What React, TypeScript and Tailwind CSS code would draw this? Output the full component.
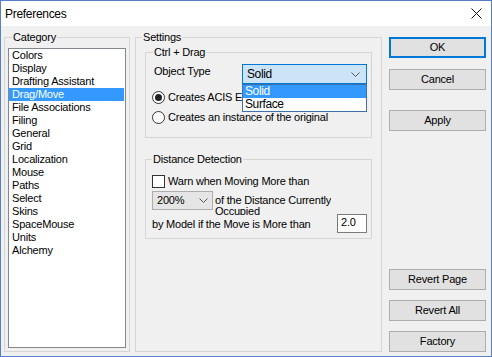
import React from "react";

const categories = [
  "Colors",
  "Display",
  "Drafting Assistant",
  "Drag/Move",
  "File Associations",
  "Filing",
  "General",
  "Grid",
  "Localization",
  "Mouse",
  "Paths",
  "Select",
  "Skins",
  "SpaceMouse",
  "Units",
  "Alchemy",
];

function Chevron() {
  return (
    <svg width="9" height="5" viewBox="0 0 9 5" className="shrink-0">
      <path d="M0.5 0.5 L4.5 4.5 L8.5 0.5" fill="none" stroke="#555" strokeWidth="1" />
    </svg>
  );
}

function Btn({ label, primary }: { label: string; primary?: boolean }) {
  return (
    <div
      className={
        "h-[21px] w-[97px] flex items-center justify-center bg-[#e1e1e1] text-black " +
        (primary ? "border-2 border-[#0078d7]" : "border border-[#adadad]")
      }
    >
      {label}
    </div>
  );
}

export default function App() {
  return (
    <div
      className="w-[492px] h-[357px] border border-[#5580c8] bg-[#f0f0f0] flex flex-col overflow-hidden text-[11px] tracking-[-0.2px] text-black"
      style={{ fontFamily: '"Liberation Sans", Arial, sans-serif' }}
    >
      {/* Title bar */}
      <div className="h-[25px] bg-white flex items-center justify-between pl-[4px] pr-[9px] shrink-0">
        <span className="text-[12px] tracking-[-0.3px]">Preferences</span>
        <svg width="11" height="11" viewBox="0 0 11 11">
          <path d="M0.5 0.5 L10.5 10.5 M10.5 0.5 L0.5 10.5" stroke="#111" strokeWidth="1" />
        </svg>
      </div>

      {/* Body */}
      <div className="flex-1 flex pt-[5px] pb-[4px] pl-[3px]">
        {/* Category */}
        <fieldset className="w-[126px] border border-[#d5d5d5] shrink-0 min-w-0">
          <legend className="ml-[7px] px-[1px] leading-[13px]">Category</legend>
          <div className="px-[3px] pt-[4px]">
            <div className="h-[300px] border border-[#828790] bg-white">
              {categories.map((c) => (
                <div
                  key={c}
                  className={
                    "h-[13px] leading-[13px] pl-[3px] whitespace-nowrap " +
                    (c === "Drag/Move" ? "bg-[#3399ff] text-white mr-[1px]" : "")
                  }
                >
                  {c}
                </div>
              ))}
            </div>
          </div>
        </fieldset>

        {/* Settings */}
        <fieldset className="ml-[5px] w-[247px] border border-[#d5d5d5] shrink-0 min-w-0">
          <legend className="ml-[6px] px-[1px] leading-[13px]">Settings</legend>
          <div className="pl-[9px] pr-[9px] pt-[2px]">
            {/* Ctrl + Drag */}
            <fieldset className="border border-[#d5d5d5] min-w-0">
              <legend className="ml-[7px] px-[1px] leading-[13px]">Ctrl + Drag</legend>
              <div className="pl-[6px] pr-[4px] pt-[5px] pb-[13px]">
                <div className="flex items-start h-[20px]">
                  <div className="w-[88px] ml-[2px] leading-[13px] pt-[1px] shrink-0">Object Type</div>
                  <div className="relative w-[125px] shrink-0">
                    <div className="h-[20px] border border-[#0078d7] bg-[#cce4f7] flex items-center justify-between pl-[4px] pr-[6px] text-[12px] tracking-[-0.4px]">
                      <span>Solid</span>
                      <Chevron />
                    </div>
                    <div className="absolute left-0 top-full w-full border border-[#3a6fb0] bg-white text-[12px] tracking-[-0.4px] z-10">
                      <div className="h-[13px] leading-[13px] pl-[2px] bg-[#3399ff] text-white">Solid</div>
                      <div className="h-[13px] leading-[13px] pl-[2px]">Surface</div>
                    </div>
                  </div>
                </div>
                <div className="flex items-center h-[14px] mt-[6px]">
                  <div className="w-[13px] h-[13px] rounded-full border border-[#333] bg-white flex items-center justify-center">
                    <div className="w-[7px] h-[7px] rounded-full bg-[#222]" />
                  </div>
                  <span className="ml-[3px] leading-[13px] whitespace-nowrap">Creates ACIS Entities</span>
                </div>
                <div className="flex items-center h-[14px] mt-[6px]">
                  <div className="w-[13px] h-[13px] rounded-full border border-[#333] bg-white" />
                  <span className="ml-[3px] leading-[13px] whitespace-nowrap">Creates an instance of the original</span>
                </div>
              </div>
            </fieldset>

            {/* Distance Detection */}
            <fieldset className="border border-[#d5d5d5] mt-[15px] min-w-0">
              <legend className="ml-[6px] px-[1px] leading-[13px]">Distance Detection</legend>
              <div className="pl-[6px] pr-[4px] pt-[9px] pb-[5px]">
                <div className="flex items-center h-[13px]">
                  <div className="w-[13px] h-[13px] border border-[#333] bg-white" />
                  <span className="ml-[3px] leading-[13px]">Warn when Moving More than</span>
                </div>
                <div className="flex items-start h-[19px] mt-[3px]">
                  <div className="w-[61px] h-[19px] border border-[#adadad] bg-[#e5e5e5] flex items-center justify-between pl-[4px] pr-[4px] shrink-0">
                    <span>200%</span>
                    <Chevron />
                  </div>
                  <div className="ml-[2px] mt-[4px] h-[20px] overflow-hidden leading-[11px]">
                    of the Distance Currently
                    <br />
                    Occupied
                  </div>
                </div>
                <div className="flex items-center justify-between h-[19px] mt-[4px]">
                  <span className="leading-[13px] pt-[2px]">by Model if the Move is More than</span>
                  <div className="w-[30px] h-[19px] border border-[#7a7a7a] bg-white pl-[3px] leading-[15px]">2.0</div>
                </div>
              </div>
            </fieldset>
          </div>
        </fieldset>

        {/* Buttons */}
        <div className="ml-[7px] w-[97px] flex flex-col pt-[6px]">
          <Btn label="OK" primary />
          <div className="mt-[11px]">
            <Btn label="Cancel" />
          </div>
          <div className="mt-[20px]">
            <Btn label="Apply" />
          </div>
          <div className="flex-1" />
          <Btn label="Revert Page" />
          <div className="mt-[10px]">
            <Btn label="Revert All" />
          </div>
          <div className="mt-[10px]">
            <Btn label="Factory" />
          </div>
        </div>
      </div>
    </div>
  );
}
